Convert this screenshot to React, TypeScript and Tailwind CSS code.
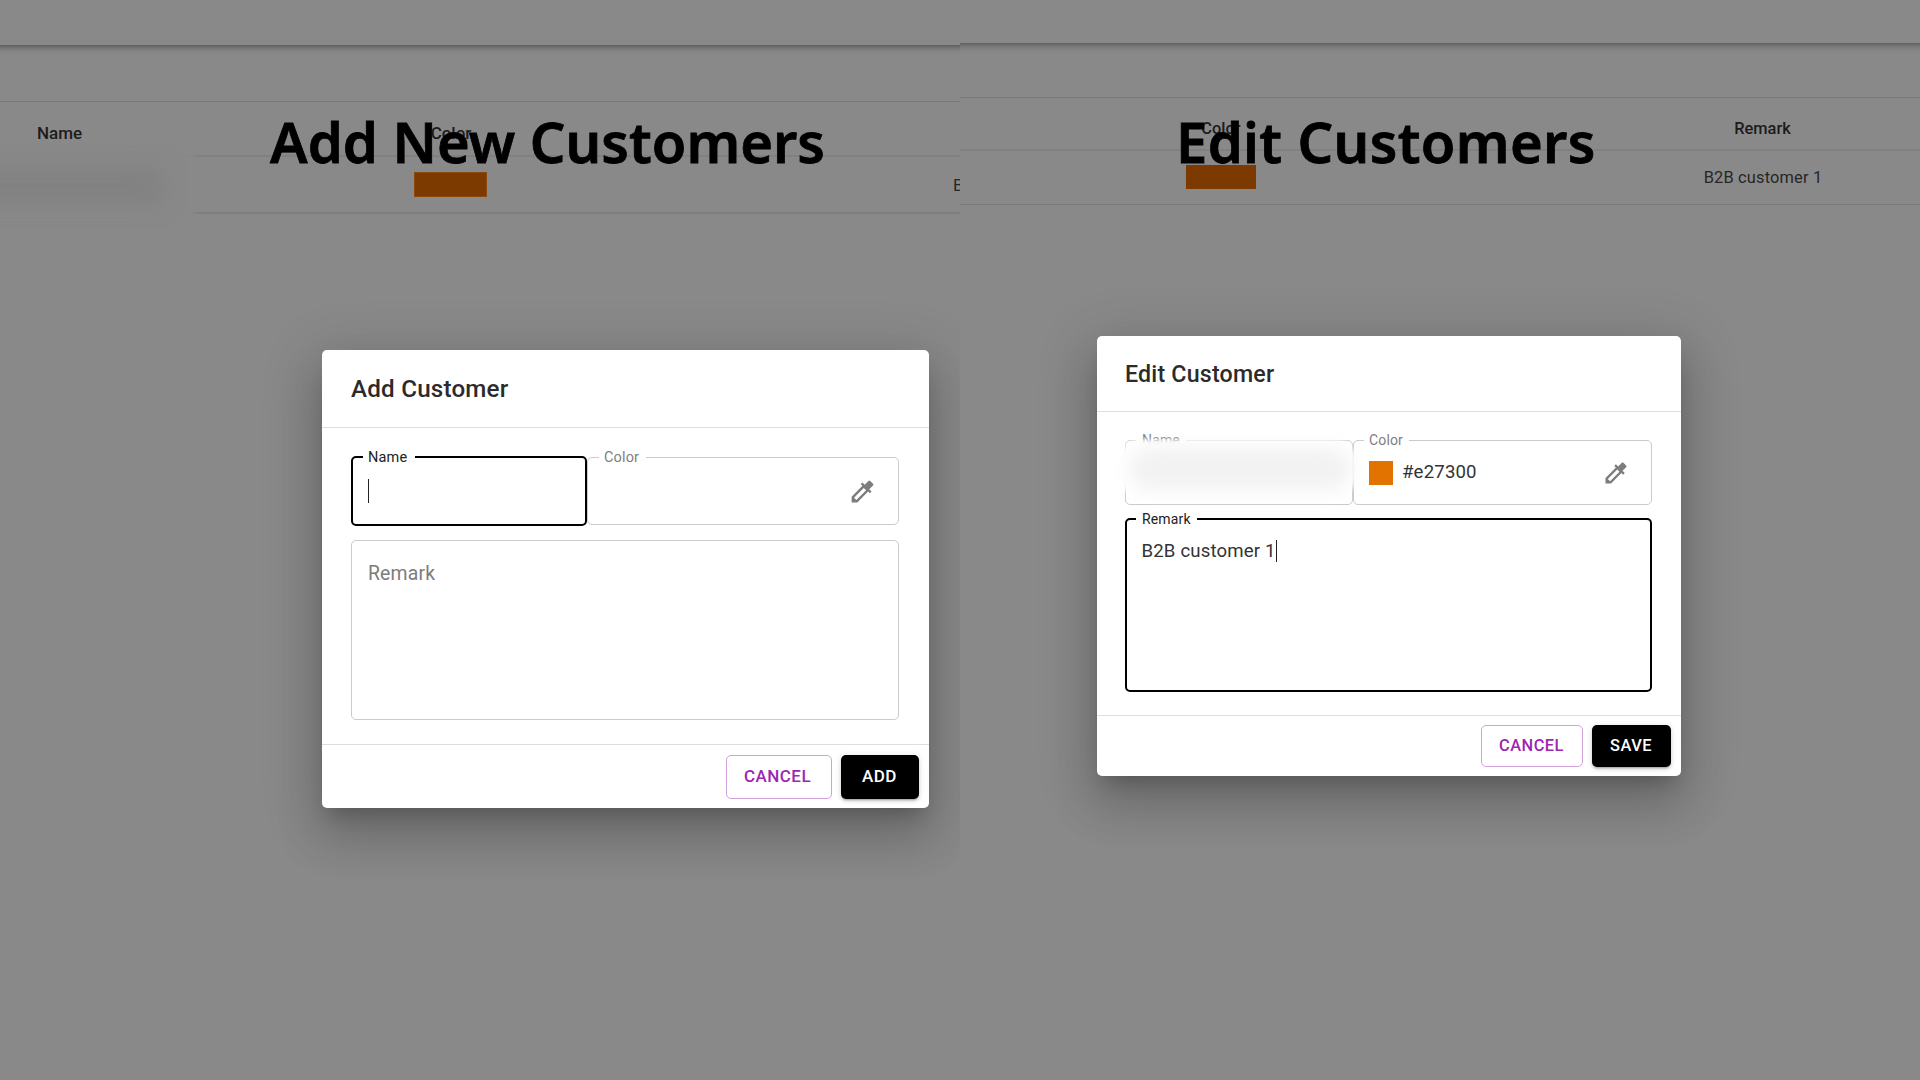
import type { ReactNode } from "react";

function Eyedropper({ className }: { className: string }) {
  return (
    <svg viewBox="0 0 24 24" className={className} fill="currentColor">
      <path d="m20.71 5.63-2.34-2.34a.9959.9959 0 0 0-1.41 0l-3.12 3.12-1.93-1.91-1.41 1.41 1.42 1.42L3 16.25V21h4.75l8.92-8.92 1.42 1.42 1.41-1.41-1.92-1.92 3.12-3.12c.4-.4.4-1.02.01-1.42zM6.92 19 5 17.08l8.06-8.06 1.92 1.92L6.92 19z" />
    </svg>
  );
}

type FieldProps = {
  label?: string;
  focused?: boolean;
  className: string;
  labelClass?: string;
  children?: ReactNode;
};

function Field({ label, focused, className, labelClass = "", children }: FieldProps) {
  return (
    <div
      className={`relative flex shrink-0 rounded-[5px] ${
        focused ? "border-2 border-black" : "border border-[#cbcbcb]"
      } ${className}`}
    >
      {label && (
        <span
          className={`absolute flex h-4 items-center bg-white tracking-[0.01em] ${
            focused ? "text-[#222]" : "text-[#808080]"
          } ${labelClass}`}
        >
          {label}
        </span>
      )}
      {children}
    </div>
  );
}

const dialogShadow =
  "shadow-[0_13px_18px_-8px_rgba(0,0,0,0.2),0_29px_46px_4px_rgba(0,0,0,0.14),0_11px_56px_10px_rgba(0,0,0,0.12)]";
const buttonShadow = "shadow-[0_3px_2px_-2px_rgba(0,0,0,0.2),0_2px_3px_rgba(0,0,0,0.14),0_1px_6px_rgba(0,0,0,0.12)]";
const barShadow = "shadow-[0_2px_5px_-1px_rgba(0,0,0,0.3),0_4px_6px_rgba(0,0,0,0.1),0_1px_10px_rgba(0,0,0,0.06)]";

function AddPanel() {
  return (
    <section className="relative h-full w-[960px] overflow-hidden">
      <div className={`-mx-4 h-[45px] ${barShadow}`} />
      <div className="h-[57px] border-b border-[#7a7a7a]" />
      <div className="flex h-[55px] items-center border-b-2 border-[#808080] text-[17px] font-medium text-[#1c1c1c]">
        <div className="w-[119px] pt-[11px] text-center">Name</div>
        <div className="w-[664px] pt-[11px] text-center">Color</div>
      </div>
      <div className="relative flex h-[57px] items-center border-b-2 border-[#7e7e7e] text-[17px] text-[#262626]">
        <div className="absolute -left-8 -top-1 h-[66px] w-[226px] bg-[#898989] blur-[3px]" />
        <div className="absolute -left-12 top-2 h-[42px] w-[214px] rounded-full bg-[#828282] blur-[10px]" />
        <div className="ml-[414px] h-[25px] w-[73px] shrink-0 border border-[#8a4a0c] bg-[#7d3a00]" />
        <div className="ml-[466px] shrink-0 whitespace-nowrap pt-0.5">B2B customer 1</div>
      </div>

      <div className="absolute inset-0 flex items-start pl-[322px] pt-[350px]">
        <div className={`flex h-[458px] w-[606.5px] flex-col rounded-[5px] bg-white ${dialogShadow}`}>
          <div className="flex h-[78px] items-center border-b border-[#dedede] pl-[29px] pt-px text-[24.2px] font-medium tracking-[0.0085em] text-[#2b2b2b]">
            Add Customer
          </div>
          <div className="flex h-[316px] flex-col px-[29px] pt-[28px]">
            <div className="flex">
              <Field
                label="Name"
                focused
                className="h-[70px] w-[236px]"
                labelClass="-top-[8px] left-[10px] w-[52px] pl-[5px] text-[14.5px]"
              >
                <div className="ml-[15px] mt-[21px] h-[24px] w-px bg-[#222]" />
              </Field>
              <Field
                label="Color"
                className="mt-px h-[68px] w-[312px] items-center justify-end pr-[21.5px] text-[#7d7d7d]"
                labelClass="-top-[8px] left-[10.5px] w-[47px] pl-[5.5px] text-[14.5px]"
              >
                <Eyedropper className="size-[29px]" />
              </Field>
            </div>
            <Field className="mt-[14px] h-[180px] w-[548px] pl-4 pt-[19px] text-[19.4px] leading-7 tracking-[0.009em] text-[#7c7c7c]">
              Remark
            </Field>
          </div>
          <div className="flex flex-1 items-center justify-end gap-[9px] border-t border-[#dedede] pr-[10px] text-[17px] font-medium tracking-[0.0286em]">
            <button className="h-[44px] w-[106px] rounded-[5px] border border-[#d3a0dd] pr-0.5 pt-px text-[#9c27b0]">CANCEL</button>
            <button className={`h-[44px] w-[78px] rounded-[5px] bg-black pt-px text-white ${buttonShadow}`}>ADD</button>
          </div>
        </div>
      </div>
    </section>
  );
}

function EditPanel() {
  return (
    <section className="relative h-full w-[960px] overflow-hidden">
      <div className={`-mx-4 h-[43px] ${barShadow}`} />
      <div className="h-[55px] border-b border-[#7a7a7a]" />
      <div className="flex h-[53px] items-center border-b-2 border-[#808080] text-[16.4px] font-medium text-[#1c1c1c]">
        <div className="w-[522px] shrink-0 pt-[11px] text-center">Color</div>
        <div className="w-[561px] shrink-0 pt-[11px] text-center">Remark</div>
      </div>
      <div className="flex h-[54px] items-center border-b border-[#7a7a7a] text-[16.4px] tracking-[0.01em] text-[#262626]">
        <div className="flex w-[522px] shrink-0 justify-center pb-px">
          <div className="h-[24px] w-[70px] bg-[#7d3a00]" />
        </div>
        <div className="w-[561px] shrink-0 pl-px pt-0.5 text-center">B2B customer 1</div>
      </div>

      <div className="absolute inset-0 flex items-start pl-[137px] pt-[336px]">
        <div className={`flex h-[440px] w-[583.5px] flex-col rounded-[5px] bg-white ${dialogShadow}`}>
          <div className="flex h-[76px] items-center border-b border-[#dedede] pl-[28px] pt-px text-[23.2px] font-medium tracking-[0.0085em] text-[#2b2b2b]">
            Edit Customer
          </div>
          <div className="flex h-[303px] flex-col px-[28px] pt-[28px]">
            <div className="relative flex">
              <Field
                label="Name"
                className="h-[65px] w-[228px]"
                labelClass="-top-[9px] left-[10px] w-[50px] pl-[6px] text-[14px]"
              />
              <Field
                label="Color"
                className="h-[65px] w-[299px] items-center pl-[15px] pr-[21px] text-[18.6px] tracking-[0.009em] text-[#333]"
                labelClass="-top-[9px] left-[10px] w-[45px] pl-[5px] text-[14px]"
              >
                <div className="mr-[9px] size-[24px] bg-[#e27300]" />
                <span className="flex-1">#e27300</span>
                <Eyedropper className="size-[28px] text-[#7d7d7d]" />
              </Field>
              <div className="absolute -left-1 top-0 h-[56px] w-[234px] rounded-[18px] bg-white blur-[2px]" />
              <div className="absolute left-1 top-2 h-[42px] w-[222px] rounded-[20px] bg-[#f2f2f2] blur-[9px]" />
            </div>
            <Field
              label="Remark"
              focused
              className="mt-[13px] h-[174px] w-[527px] pl-[14.5px] pt-[17px] text-[18.6px] leading-7 tracking-[0.009em] text-[#333]"
              labelClass="-top-[9px] left-[9px] w-[61px] pl-[6px] text-[14px]"
            >
              <span>B2B customer 1</span>
              <span className="mt-[3px] h-[22px] w-px bg-[#222]" />
            </Field>
          </div>
          <div className="flex flex-1 items-center justify-end gap-[9px] border-t border-[#dedede] pr-[10px] text-[16.4px] font-medium tracking-[0.0286em]">
            <button className="h-[42px] w-[102px] rounded-[5px] border border-[#d3a0dd] pt-px text-[#9c27b0]">CANCEL</button>
            <button className={`h-[42px] w-[79px] rounded-[5px] bg-black pt-px text-white ${buttonShadow}`}>SAVE</button>
          </div>
        </div>
      </div>
    </section>
  );
}

export default function App() {
  return (
    <main className="relative flex h-[1080px] w-[1920px] overflow-hidden bg-[#898989] font-['Roboto',sans-serif]">
      <AddPanel />
      <EditPanel />
      <h1 className="absolute left-[270px] top-[101px] whitespace-nowrap font-['Noto_Sans',sans-serif] text-[56px] font-semibold leading-[80px] tracking-[0.05px] text-black [-webkit-text-stroke:0.8px_black]">
        Add New Customers
      </h1>
      <h1 className="absolute left-[1176px] top-[101px] whitespace-nowrap font-['Noto_Sans',sans-serif] text-[56px] font-semibold leading-[80px] tracking-[0.4px] text-black [-webkit-text-stroke:0.8px_black]">
        Edit Customers
      </h1>
    </main>
  );
}
